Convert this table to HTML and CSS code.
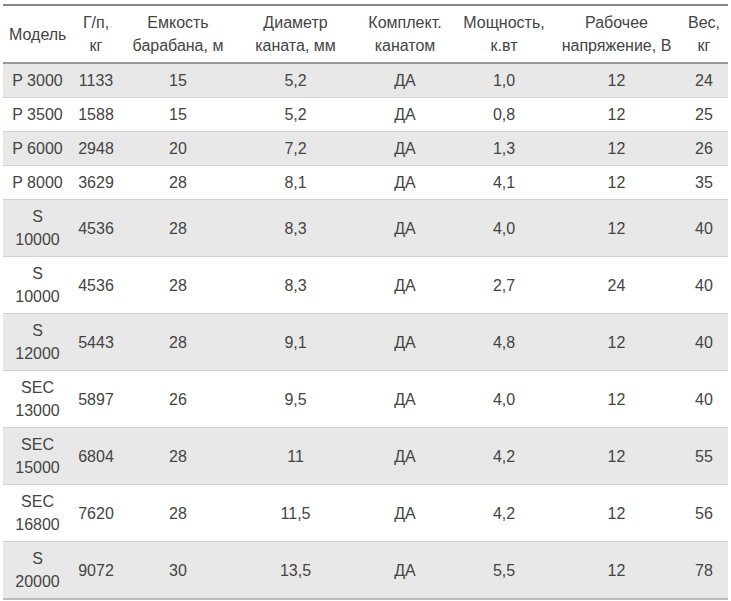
FILE: index.html
```html
<!DOCTYPE html>
<html lang="ru">
<head>
    <meta charset="UTF-8">
    <meta name="viewport" content="width=device-width, initial-scale=1.0">
    <title>Лебедки</title>
    <link rel="stylesheet" href="styles.css">
</head>
<body>
    <div class="wrap">
        <table class="specs">
            <colgroup>
                <col class="c-model">
                <col class="c-load">
                <col class="c-drum">
                <col class="c-rope">
                <col class="c-kit">
                <col class="c-power">
                <col class="c-volt">
                <col class="c-weight">
            </colgroup>
            <thead>
                <tr>
                    <th>Модель</th>
                    <th>Г/п, кг</th>
                    <th>Емкость барабана, м</th>
                    <th>Диаметр каната, мм</th>
                    <th>Комплект. канатом</th>
                    <th>Мощность, к.вт</th>
                    <th>Рабочее напряжение, В</th>
                    <th>Вес, кг</th>
                </tr>
            </thead>
            <tbody>
                <tr><td>P 3000</td><td>1133</td><td>15</td><td>5,2</td><td>ДА</td><td>1,0</td><td>12</td><td>24</td></tr>
                <tr><td>P 3500</td><td>1588</td><td>15</td><td>5,2</td><td>ДА</td><td>0,8</td><td>12</td><td>25</td></tr>
                <tr><td>P 6000</td><td>2948</td><td>20</td><td>7,2</td><td>ДА</td><td>1,3</td><td>12</td><td>26</td></tr>
                <tr><td>P 8000</td><td>3629</td><td>28</td><td>8,1</td><td>ДА</td><td>4,1</td><td>12</td><td>35</td></tr>
                <tr><td>S 10000</td><td>4536</td><td>28</td><td>8,3</td><td>ДА</td><td>4,0</td><td>12</td><td>40</td></tr>
                <tr><td>S 10000</td><td>4536</td><td>28</td><td>8,3</td><td>ДА</td><td>2,7</td><td>24</td><td>40</td></tr>
                <tr><td>S 12000</td><td>5443</td><td>28</td><td>9,1</td><td>ДА</td><td>4,8</td><td>12</td><td>40</td></tr>
                <tr><td>SEC 13000</td><td>5897</td><td>26</td><td>9,5</td><td>ДА</td><td>4,0</td><td>12</td><td>40</td></tr>
                <tr><td>SEC 15000</td><td>6804</td><td>28</td><td>11</td><td>ДА</td><td>4,2</td><td>12</td><td>55</td></tr>
                <tr><td>SEC 16800</td><td>7620</td><td>28</td><td>11,5</td><td>ДА</td><td>4,2</td><td>12</td><td>56</td></tr>
                <tr><td>S 20000</td><td>9072</td><td>30</td><td>13,5</td><td>ДА</td><td>5,5</td><td>12</td><td>78</td></tr>
            </tbody>
        </table>
    </div>
</body>
</html>
```

FILE: styles.css
```css
body {
    margin: 0;
    background: #fff;
    font-family: "Liberation Sans", Arial, sans-serif;
    font-size: 16px;
    line-height: 23px;
    color: #444;
}
.wrap {
    padding: 4px 3px 0 3px;
}
.specs {
    width: 725px;
    table-layout: fixed;
    border-collapse: collapse;
    border-top: 2px solid #8a8a8a;
}
.c-model { width: 69px; }
.c-load { width: 48px; }
.c-drum { width: 116px; }
.c-rope { width: 119px; }
.c-kit { width: 100px; }
.c-power { width: 98px; }
.c-volt { width: 127px; }
.c-weight { width: 48px; }
.specs th,
.specs td {
    padding: 5px 6px;
    text-align: center;
    vertical-align: middle;
    font-weight: normal;
}
.specs thead th {
    border-bottom: 2px solid #9a9a9a;
}
.specs tbody td {
    border-bottom: 1px solid #d2d2d2;
}
.specs tbody tr:nth-child(odd) {
    background: #e8e8e8;
}
.specs tbody tr:last-child td {
    border-bottom: 2px solid #bcbcbc;
}
```
